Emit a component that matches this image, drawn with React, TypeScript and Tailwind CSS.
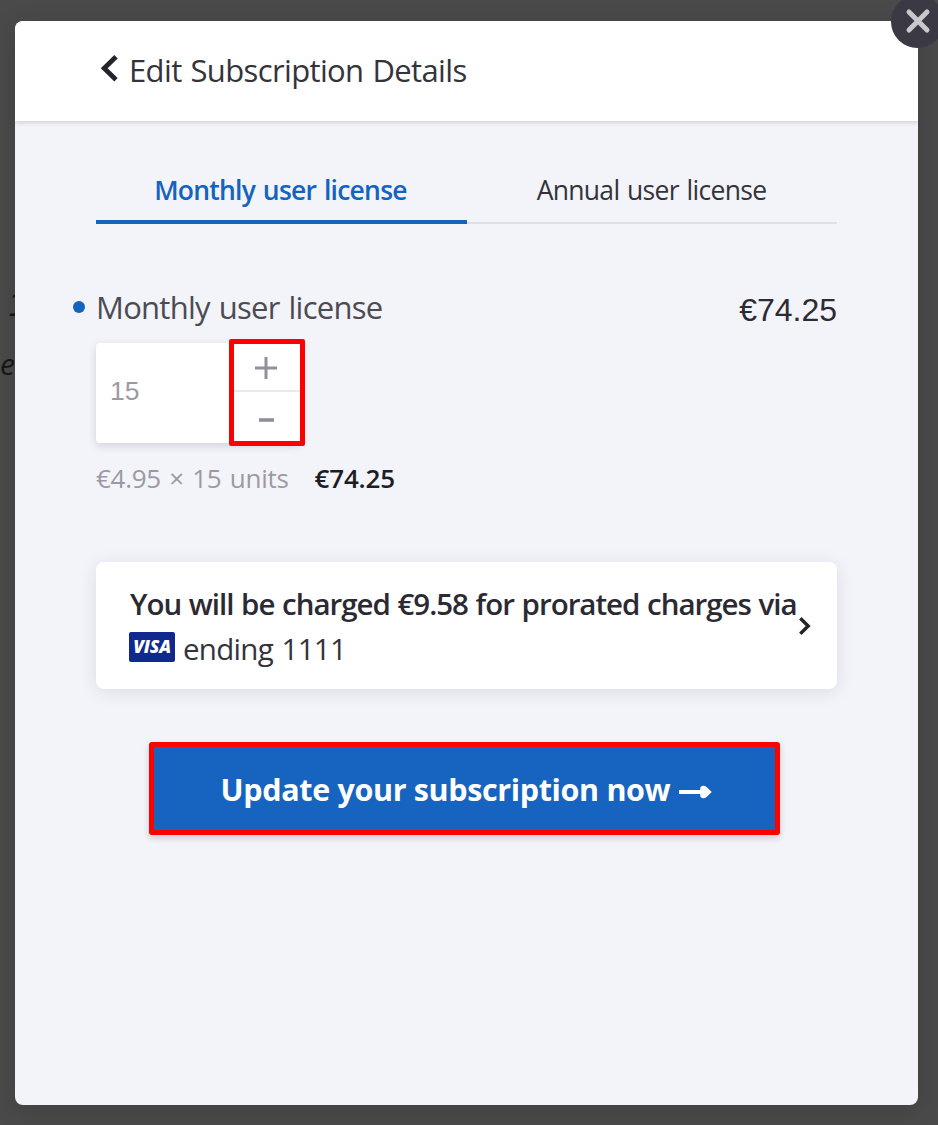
import React from "react";

function ChevronLeft() {
  return (
    <svg width="18" height="27" viewBox="0 0 18 27" className="shrink-0" fill="none" stroke="#25242d" strokeWidth="4.8">
      <path d="M16 1.8 L4.2 13.3 L16 24.8" />
    </svg>
  );
}

function ChevronRight() {
  return (
    <svg width="12" height="18" viewBox="0 0 12 18" className="mt-px shrink-0" fill="none" stroke="#25242d" strokeWidth="3.4">
      <path d="M1.3 1.2 L9.2 9 L1.3 16.8" />
    </svg>
  );
}

function VisaBadge() {
  return (
    <span className="-ml-px -mt-[2px] flex h-[30px] w-[46px] shrink-0 items-center justify-center rounded-[2px] bg-[#10298e] font-['Open_Sans',sans-serif] text-[17.5px] font-extrabold italic leading-none tracking-[-0.2px] text-white">
      VISA
    </span>
  );
}

function QuantityField() {
  return (
    <div className="relative ml-[22px] flex h-[100px] w-[204px] rounded-[4px] bg-white shadow-[0_3px_8px_rgba(40,40,60,0.16)]">
      <div className="flex flex-1 items-center pl-[14px] pb-[2px] font-['Liberation_Sans',sans-serif] text-[26.5px] text-[#9b9aa4]">15</div>
      <div className="flex w-[68px] flex-col">
        <button className="flex h-[49px] items-center justify-center border-b-2 border-[#e9e9ec] pt-[2px]" aria-label="Increase">
          <svg width="22" height="22" viewBox="0 0 22 22" stroke="#918f9b" strokeWidth="3">
            <path d="M0 11H22M11 0V22" />
          </svg>
        </button>
        <button className="flex flex-1 items-center justify-center pt-1" aria-label="Decrease">
          <svg width="15" height="4" viewBox="0 0 15 4" stroke="#918f9b" strokeWidth="3.6">
            <path d="M0 2H15" />
          </svg>
        </button>
      </div>
      <div className="pointer-events-none absolute -top-1 left-[133px] h-[107px] w-[76px] rounded-[2px] border-[5px] border-[#ff0000]" />
    </div>
  );
}

export default function App() {
  return (
    <div className="relative flex h-[1125px] w-[938px] overflow-hidden whitespace-nowrap bg-[#4a4a4a] pl-[15px] pt-[21px] font-['Open_Sans',sans-serif] text-[#34333c]">
      <span className="absolute left-[8px] top-[286px] font-['DejaVu_Sans',sans-serif] text-[30px] italic leading-[40px] text-[#17171a]">1</span>
      <span className="absolute left-0 top-[344px] text-[30px] italic leading-[40px] text-[#17171a]">e</span>

      <section className="relative flex h-[1084px] w-[903px] flex-col overflow-hidden rounded-[8px] bg-[#f3f4f9] shadow-[0_4px_24px_rgba(0,0,0,0.15)]">
        <header className="relative flex h-[100px] shrink-0 items-center bg-white pb-[2px] pl-[85px] shadow-[0_1px_5px_rgba(40,40,60,0.22)]">
          <span className="pb-1"><ChevronLeft /></span>
          <h1 className="ml-[11px] text-[31px] leading-[40px] tracking-[-0.63px] [word-spacing:1.5px]">Edit Subscription Details</h1>
        </header>

        <nav className="ml-[81px] mt-[44px] flex w-[741px] text-[26.5px] leading-[51px]">
          <button className="flex h-[59px] w-[371px] justify-center border-b-4 border-[#1463bf] pr-[2px] font-semibold tracking-[-0.75px] text-[#1463bf] [word-spacing:1.5px]">Monthly user license</button>
          <button className="flex h-[59px] flex-1 justify-center border-b-2 border-[#dfe0e6] pr-px tracking-[-0.7px] [word-spacing:1.5px]">Annual user license</button>
        </nav>

        <div className="ml-[58px] mt-[63px] flex h-[56px] w-[764px] items-start">
          <span className="mt-[14px] h-[12px] w-[12px] rounded-full bg-[#1463bf]" />
          <h2 className="ml-[11px] flex-1 text-[31px] leading-[41px] tracking-[-0.73px] text-[#4c4b53] [word-spacing:1.5px]">Monthly user license</h2>
          <span className="font-['Liberation_Sans',sans-serif] text-[32px] leading-[46px] text-[#2c2b33]">€74.25</span>
        </div>

        <div className="ml-[59px] flex flex-col">
          <QuantityField />
          <div className="ml-[22px] mt-[15px] flex text-[26px] leading-[40px]">
            <span className="tracking-[-0.3px] text-[#9b9aa4] [word-spacing:2px]">€4.95 × 15 units</span>
            <strong className="ml-[26px] font-semibold tracking-[-0.15px] text-[#1e1d24]">€74.25</strong>
          </div>
        </div>

        <button className="ml-[81px] mt-[64px] flex h-[127px] w-[741px] shrink-0 items-center rounded-[8px] bg-white pl-[34px] text-left text-[29.5px] leading-[45px] shadow-[0_3px_18px_rgba(40,40,60,0.11)]">
          <span className="flex w-[669px] flex-col">
            <span className="font-semibold tracking-[-1.02px] text-[#2b2a33] [word-spacing:1px]">You will be charged €9.58 for prorated charges via</span>
            <span className="flex items-center tracking-[-0.7px]">
              <VisaBadge />
              <span className="ml-[8px] [word-spacing:1.5px]">ending 1111</span>
            </span>
          </span>
          <ChevronRight />
        </button>

        <button className="ml-[134px] mt-[53px] flex h-[93px] w-[631px] shrink-0 items-center justify-center rounded-[3px] border-[5px] border-[#ff0000] bg-[#1763c0] pl-[4px] pt-px text-[30.5px] font-bold leading-[40px] text-white shadow-[0_3px_6px_rgba(40,40,60,0.2)]">
          <span className="tracking-[-0.35px]">Update your subscription now</span>
          <svg width="33" height="14" viewBox="0 0 33 14" className="ml-[9px] mt-[6px]" fill="white">
            <path d="M0 5H21.2V4Q21.2 0.8 24.5 0.8Q26 0.8 27.5 2L32.8 7L27.5 12Q26 13.2 24.5 13.2Q21.2 13.2 21.2 10V9H0Z" />
          </svg>
        </button>
      </section>

      <button className="absolute left-[891px] top-[-5px] flex h-[53px] w-[53px] items-center justify-center rounded-full bg-[#3b3a44] pb-px" aria-label="Close">
        <svg width="26" height="26" viewBox="0 0 26 26" fill="none" stroke="#c9c9cb" strokeWidth="5" strokeLinecap="round">
          <path d="M4 4L22 22M22 4L4 22" />
        </svg>
      </button>
    </div>
  );
}
